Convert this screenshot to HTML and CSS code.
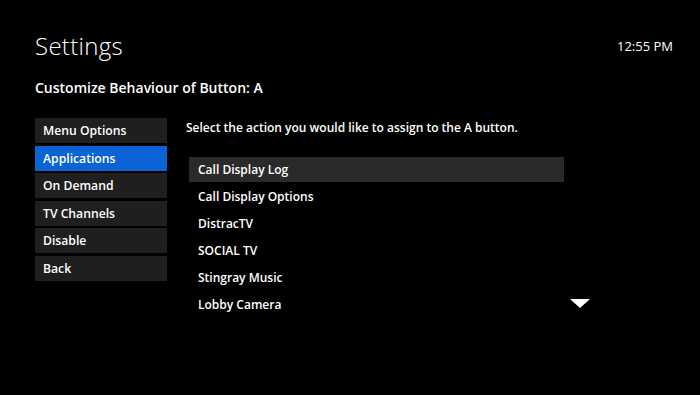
FILE: index.html
```html
<!DOCTYPE html>
<html>
<head>
    <link rel="stylesheet" href="styles.css">
</head>
<body>
    <div class="screen">
        <div class="top-bar">
            <h1 class="title">Settings</h1>
            <span class="clock">12:55 PM</span>
        </div>
        <h2 class="subtitle">Customize Behaviour of Button: A</h2>
        <div class="main">
            <ul class="menu">
                <li class="menu-item">Menu Options</li>
                <li class="menu-item active">Applications</li>
                <li class="menu-item">On Demand</li>
                <li class="menu-item">TV Channels</li>
                <li class="menu-item">Disable</li>
                <li class="menu-item">Back</li>
            </ul>
            <div class="panel">
                <p class="prompt">Select the action you would like to assign to the A button.</p>
                <ul class="options">
                    <li class="option selected">Call Display Log</li>
                    <li class="option">Call Display Options</li>
                    <li class="option">DistracTV</li>
                    <li class="option">SOCIAL TV</li>
                    <li class="option">Stingray Music</li>
                    <li class="option">Lobby Camera</li>
                </ul>
                <svg class="more" width="20" height="10" viewBox="0 0 20 10">
                    <polygon points="0,0 20,0 10,9" fill="#ffffff"/>
                </svg>
            </div>
        </div>
    </div>
</body>
</html>
```

FILE: styles.css
```css
body {
    margin: 0;
    background: #000;
    color: #fff;
    font-family: "Open Sans", "Noto Sans", sans-serif;
}
.screen {
    width: 700px;
    height: 395px;
    padding: 30px 27px 0 35px;
    box-sizing: border-box;
}
.top-bar {
    display: flex;
    justify-content: space-between;
    align-items: flex-start;
}
.title {
    margin: 0;
    font-size: 24px;
    font-weight: 300;
    line-height: 32px;
    letter-spacing: 0.3px;
}
.clock {
    font-size: 13px;
    margin-top: 7px;
}
.subtitle {
    margin: 16px 0 0 0;
    font-size: 14px;
    font-weight: 600;
    line-height: 20px;
}
.main {
    display: flex;
    margin-top: 20px;
}
.menu {
    list-style: none;
    margin: 0;
    padding: 0;
    width: 132px;
    display: flex;
    flex-direction: column;
    gap: 2.5px;
}
.menu-item {
    background: #1f1f1f;
    height: 25px;
    line-height: 25px;
    padding-left: 8px;
    font-size: 12.2px;
    font-weight: 600;
}
.menu-item.active {
    background: #0a64d6;
}
.panel {
    position: relative;
    margin-left: 19px;
    flex: 1;
}
.prompt {
    margin: 0;
    font-size: 12px;
    font-weight: 600;
    line-height: 20px;
}
.options {
    list-style: none;
    margin: 19px 0 0 3px;
    padding: 0;
    width: 375px;
}
.option {
    height: 25px;
    line-height: 25px;
    margin-bottom: 2px;
    padding-left: 9px;
    font-size: 12px;
    font-weight: 600;
}
.option.selected {
    background: #2b2a2b;
}
.more {
    position: absolute;
    left: 384px;
    top: 181px;
}
```
